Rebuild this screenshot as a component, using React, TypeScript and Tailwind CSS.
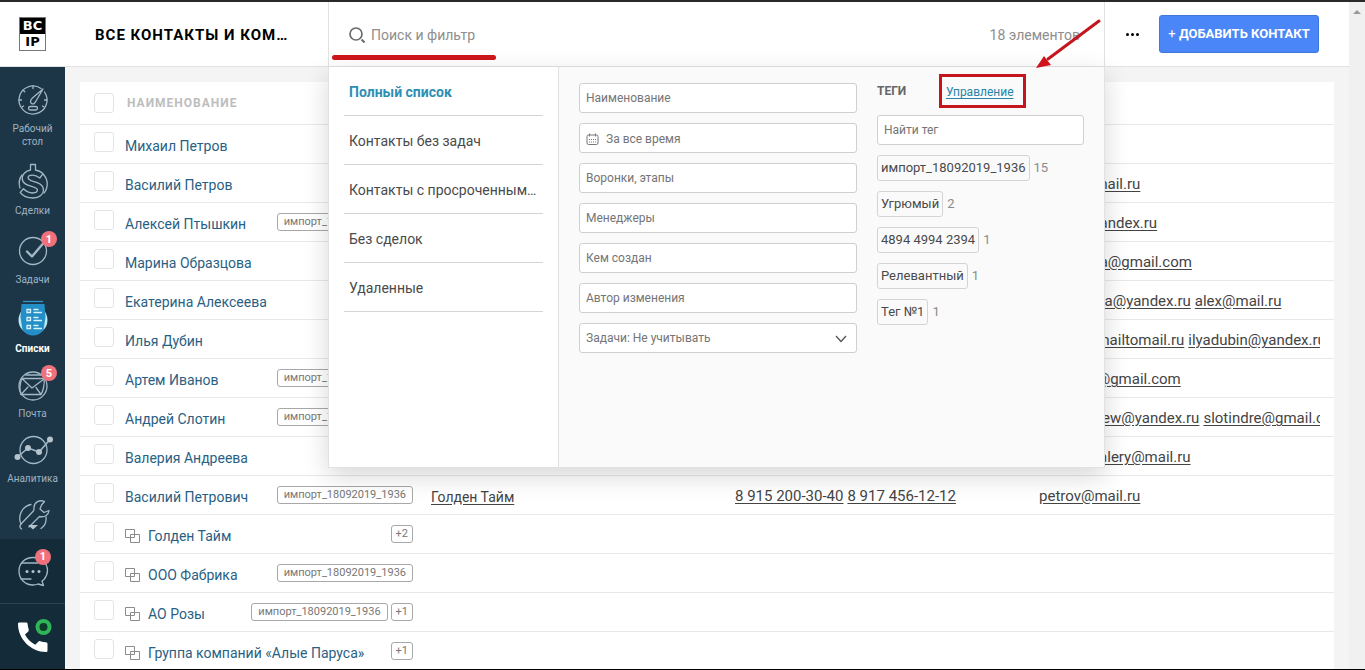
import type { ReactNode } from "react";
import clsx from "clsx";

interface Contact {
  name: string;
  isCompany?: boolean;
  tags?: string[];
  company?: string;
  phones?: string[];
  emails?: string[];
}

const IMPORT_TAG = "импорт_18092019_1936";

const contacts: Contact[] = [
  { name: "Михаил Петров" },
  { name: "Василий Петров", emails: ["petrov@mail.ru"] },
  { name: "Алексей Птышкин", tags: [IMPORT_TAG], emails: ["iptysh@yandex.ru"] },
  { name: "Марина Образцова", emails: ["obrazsova@gmail.com"] },
  { name: "Екатерина Алексеева", emails: ["ekalexeeva@yandex.ru", "alex@mail.ru"] },
  { name: "Илья Дубин", emails: ["lyadub@mailtomail.ru", "ilyadubin@yandex.ru"] },
  { name: "Артем Иванов", tags: [IMPORT_TAG], emails: ["vanovart@gmail.com"] },
  { name: "Андрей Слотин", tags: [IMPORT_TAG], emails: ["slotoandrew@yandex.ru", "slotindre@gmail.com"] },
  { name: "Валерия Андреева", emails: ["andreevvalery@mail.ru"] },
  {
    name: "Василий Петрович",
    tags: [IMPORT_TAG],
    company: "Голден Тайм",
    phones: ["8 915 200-30-40", "8 917 456-12-12"],
    emails: ["petrov@mail.ru"],
  },
  { name: "Голден Тайм", isCompany: true, tags: ["+2"] },
  { name: "ООО Фабрика", isCompany: true, tags: [IMPORT_TAG] },
  { name: "АО Розы", isCompany: true, tags: [IMPORT_TAG, "+1"] },
  { name: "Группа компаний «Алые Паруса»", isCompany: true, tags: ["+1"] },
];

const presets = ["Полный список", "Контакты без задач", "Контакты с просроченными задачами", "Без сделок", "Удаленные"];

const filterTags = [
  { label: IMPORT_TAG, count: 15 },
  { label: "Угрюмый", count: 2 },
  { label: "4894 4994 2394", count: 1 },
  { label: "Релевантный", count: 1 },
  { label: "Тег №1", count: 1 },
];

const fieldClass =
  "h-[30px] w-full rounded-[3px] border border-[#d0d0d0] bg-white px-1.5 text-xs text-[#757575] placeholder:text-[#757575] outline-none";

function Icon({ children }: { children: ReactNode }) {
  return (
    <svg viewBox="0 0 40 40" className="size-10" fill="none" stroke="#a3b8c6" strokeWidth="1.3" strokeLinecap="round" strokeLinejoin="round" aria-hidden="true">
      {children}
    </svg>
  );
}

function GaugeIcon() {
  return (
    <Icon>
      <path d="M31.5 12A14 14 0 1 1 28 8.500" />
      <path d="M30 9 20 17.500C17 20 17 22.500 18.500 23.500S22 23.500 23 21L30 9Z" />
      <rect x="15.500" y="26.500" width="9" height="3.500" rx="1.750" />
      <path d="M20 6v2.500M10 10l1.800 1.800M6 20h2.500M31.500 20H34M9 27l1.500-1M31 27l-1.500-1" />
    </Icon>
  );
}

function DollarIcon() {
  return (
    <Icon>
      <path d="M17.500 2.500h5V8c3.500.6 5.500 1.800 7.500 3.600l-3.200 4.400c-2.300-1.700-4.800-2.800-7.300-2.800-3 0-4.400 1.100-4.400 2.600 0 5 15.400 2.600 15.400 12.200 0 4.300-3.900 8-10.300 8-6 0-10.700-2.200-13-5.600l3.300-3.600c2.400 2.400 5.500 4.200 9 4.200 3.300 0 4.900-1.100 4.900-2.900 0-5-15.200-2.400-15.200-11.800C9.200 13 12 9 17.500 8V2.500Z" />
      <path d="M9 13a14 14 0 0 0-2 13M30.500 12.500A14 14 0 0 1 31 31" />
    </Icon>
  );
}

function TaskIcon() {
  return (
    <Icon>
      <circle cx="20" cy="20" r="13.500" />
      <path d="m14 20.500 5 5L30.500 12" strokeWidth="2.400" />
    </Icon>
  );
}

function ListIcon() {
  return (
    <Icon>
      <circle cx="20" cy="20" r="14.500" fill="#b9e8f7" stroke="none" />
      <path d="M8.500 4h23l1 13-2 13c-3 4-6.500 5.500-10.500 5.500S12.500 34 9.500 30l-2-13 1-13Z" fill="#238fc6" stroke="none" />
      <path d="M10 1.500h20" stroke="#2e9bd0" strokeLinecap="butt" />
      <path d="M14 9.500h3.500v3H14zM14 17.500h3.500v3H14zM14 25.500h3.500v3H14zM21 9.500h4M21 12.500h7.500M21 17.500h4M21 20.500h7.500M21 25.500h4M21 28.500h7.500" stroke="#d9f3fd" strokeLinejoin="miter" />
    </Icon>
  );
}

function MailIcon() {
  return (
    <Icon>
      <circle cx="20" cy="21" r="14" />
      <path d="M9 13.500h22c1 5-1 13-3 16H8c-2-5-1-12 1-16Z" />
      <path d="m9.500 14 9.500 9 12-9M8 29.500l7-7.500M28 29.500l-5-7M13 10h15" />
    </Icon>
  );
}

function AnalyticsIcon() {
  return (
    <Icon>
      <circle cx="20.500" cy="20" r="13.500" />
      <path d="m4.500 27 10.500-9 11 4L37 9.500" strokeWidth="1.600" />
      <g fill="#b4c4cf" stroke="none">
        <circle cx="4.500" cy="27" r="3" />
        <circle cx="15" cy="18" r="3" />
        <circle cx="26" cy="22" r="3" />
        <circle cx="37" cy="9.500" r="3" />
      </g>
    </Icon>
  );
}

function WrenchIcon() {
  return (
    <Icon>
      <path d="M31.500 4.500c-5-2-10 .5-10.500 5.500 0 2 .3 3-.8 4.200L8 27c-1.700 2-1 4 .5 5M26.500 19.500c5 1 9-1 9.500-6l-5 2-4-3.500 1.500-4 3-3.500M26.500 19.500 16 30" />
      <path d="M18 7.500A14 14 0 0 0 8 27M33 20c.5 5-1 9-5 11.500" />
      <path d="M15 28h10l-5 4.500Z" fill="#b4c4cf" stroke="none" />
    </Icon>
  );
}

function ChatIcon() {
  return (
    <Icon>
      <path d="M31 28.500c2-2.500 3.500-5.500 3.500-9C34.500 12 28 6.500 20 6.500S6 12 6 20s6 14 14 14c1.800 0 3.500-.4 5-1l5.500 1.500-1.500-4.500 2-1.500Z" />
      <path d="M9 12h16M8 28h10" />
      <g fill="#b4c4cf" stroke="none">
        <circle cx="14" cy="20.500" r="1.500" />
        <circle cx="20" cy="20.500" r="1.500" />
        <circle cx="26" cy="20.500" r="1.500" />
      </g>
    </Icon>
  );
}

function CompanyIcon() {
  return (
    <svg viewBox="0 0 16 16" className="size-4 shrink-0" fill="none" stroke="#8b8b8b" aria-hidden="true">
      <path d="M.5 1.500h9v8h-9zM5.500 6.500h9v8h-9z" />
    </svg>
  );
}

function Badge({ count }: { count: number }) {
  return (
    <span className="absolute top-0 right-2 flex size-4 items-center justify-center rounded-full bg-[#f0717c] text-[11px] font-bold text-white">
      {count}
    </span>
  );
}

interface NavItemProps {
  icon: ReactNode;
  label?: string;
  badge?: number;
  active?: boolean;
  className?: string;
}

function NavItem({ icon, label, badge, active, className }: NavItemProps) {
  return (
    <button
      type="button"
      aria-label={label ?? "Настройки"}
      className={clsx(
        "relative flex w-full flex-col items-center gap-0.5 text-[10px] leading-[13px]",
        active ? "font-bold text-white" : "text-[#9fb3c1]",
        className
      )}
    >
      {icon}
      {badge && <Badge count={badge} />}
      {label && <span className="px-3">{label}</span>}
    </button>
  );
}

function Sidebar() {
  return (
    <aside className="flex w-[65px] shrink-0 flex-col overflow-hidden bg-[#1c3648]">
      <nav className="flex min-h-0 flex-1 flex-col overflow-hidden pt-[13px]">
        <NavItem icon={<GaugeIcon />} label="Рабочий стол" />
        <NavItem icon={<DollarIcon />} label="Сделки" className="mt-3.5" />
        <NavItem icon={<TaskIcon />} label="Задачи" badge={1} className="mt-3.5" />
        <NavItem icon={<ListIcon />} label="Списки" active className="mt-3.5" />
        <NavItem icon={<MailIcon />} label="Почта" badge={5} className="mt-2.5" />
        <NavItem icon={<AnalyticsIcon />} label="Аналитика" className="mt-2.5" />
        <NavItem icon={<WrenchIcon />} className="mt-3" />
      </nav>
      <div className="shrink-0 bg-[#142b3a]">
        <button type="button" aria-label="Чаты" className="relative flex h-[65px] w-full items-center justify-center border-b border-[#2b4557]">
          <ChatIcon />
          <span className="absolute top-2.5 right-3.5 flex size-4 items-center justify-center rounded-full bg-[#f0717c] text-[11px] font-bold text-white">
            1
          </span>
        </button>
        <button type="button" aria-label="Телефония" className="flex h-[65px] w-full items-start justify-center pt-3">
          <svg viewBox="0 0 40 40" className="size-10" aria-hidden="true">
            <path d="M6.500 6.500h6.500c1 0 1.500.5 1.600 1.500.2 2 .5 3.800 1.100 5.600.2.700.1 1.300-.4 1.800l-3.300 3.200c2.300 4.500 5.800 8 10.300 10.200l3.200-3.200c.5-.5 1.100-.7 1.800-.4 1.800.6 3.700 1 5.600 1.100 1 .1 1.600.6 1.600 1.600v6.500c0 1-.6 1.600-1.600 1.600C18 36 5 23 5 8c0-1 .5-1.500 1.500-1.500Z" fill="#fff" />
            <circle cx="30.500" cy="11" r="6" fill="#0e3a2b" stroke="#2fb457" strokeWidth="4" />
          </svg>
        </button>
      </div>
    </aside>
  );
}

function FilterPanel() {
  return (
    <div className="absolute top-full -right-px -left-px z-10 mt-px flex h-[401px] border border-t-0 border-[#e2e2e2] bg-[#fafafa] text-[#4a4a4a] shadow-[0_8px_24px_rgba(0,0,0,0.16)]">
      <ul className="w-[230px] shrink-0 border-r border-[#e2e2e2] bg-white px-[15px]">
        {presets.map((preset, i) => (
          <li key={preset} className="border-b border-[#d4d4d4]">
            <button
              type="button"
              className={clsx("block h-12 w-full truncate px-[5px] pt-0.5 text-left text-sm", i === 0 && "font-bold text-[#2e8fb5]")}
            >
              {preset}
            </button>
          </li>
        ))}
      </ul>

      <form className="flex flex-1 flex-col gap-2.5 px-5 pt-4">
        <input className={fieldClass} placeholder="Наименование" aria-label="Наименование" />
        <button type="button" className={clsx(fieldClass, "flex items-center gap-[7px] pt-0.5 text-left")}>
          <svg viewBox="0 0 13 13" className="size-[13px]" fill="none" stroke="#777" aria-hidden="true">
            <rect x="1" y="2" width="11" height="9.500" rx="1.500" />
            <path d="M3.500.500v3M9.500.500v3" />
            <path d="M3 6.500h7M3 9h7" strokeDasharray="1 1" />
          </svg>
          За все время
        </button>
        <input className={fieldClass} placeholder="Воронки, этапы" aria-label="Воронки, этапы" />
        <input className={fieldClass} placeholder="Менеджеры" aria-label="Менеджеры" />
        <input className={fieldClass} placeholder="Кем создан" aria-label="Кем создан" />
        <input className={fieldClass} placeholder="Автор изменения" aria-label="Автор изменения" />
        <div className="relative">
          <select className={clsx(fieldClass, "block appearance-none")} aria-label="Задачи">
            <option>Задачи: Не учитывать</option>
          </select>
          <svg viewBox="0 0 12 8" className="pointer-events-none absolute top-3 right-2.5 h-2 w-3" fill="none" stroke="#555" strokeWidth="1.300" aria-hidden="true">
            <path d="m1 1 5 5.500L11 1" />
          </svg>
        </div>
      </form>

      <div className="flex w-[227px] shrink-0 flex-col pr-5">
        <div className="flex h-12 items-center">
          <h2 className="w-[62px] text-xs font-bold text-[#666]">ТЕГИ</h2>
          <a
            href="#tags"
            className="flex h-[34px] w-[87px] items-center border-[3px] border-[#c4161c] px-1 pt-0.5 text-xs text-[#2784a8] underline underline-offset-2"
          >
            Управление
          </a>
        </div>
        <input className={fieldClass} placeholder="Найти тег" aria-label="Найти тег" />
        <ul className="mt-2.5 flex flex-col items-start gap-2.5">
          {filterTags.map((tag) => (
            <li key={tag.label} className="flex items-center gap-1 text-[13px] text-[#8b8b8b]">
              <button type="button" className="h-[26px] rounded-[3px] border border-[#d4d4d4] px-[3px] text-[#4a4a4a]">
                {tag.label}
              </button>
              {tag.count}
            </li>
          ))}
        </ul>
      </div>
    </div>
  );
}

function Header() {
  return (
    <header className="relative z-10 flex h-[65px] shrink-0 border-b border-[#e2e2e2] bg-white">
      <div className="flex w-[65px] shrink-0 items-center justify-center">
        <div className="w-[27px] border border-[#777] text-center font-['DejaVu_Sans'] text-[13px] leading-4 font-bold text-black">
          <div className="bg-black text-white">BC</div>
          <div>IP</div>
        </div>
      </div>
      <h1 className="w-[263px] shrink-0 truncate pr-9 pl-[30px] text-[15px] leading-[66px] font-bold tracking-[1px] text-black">
        ВСЕ КОНТАКТЫ И КОМПАНИИ
      </h1>

      <div className="relative flex flex-1 items-center border-x border-[#e2e2e2] pt-px pr-6 pl-5">
        <svg viewBox="0 0 16 16" className="size-4" fill="none" stroke="#6b6b6b" strokeWidth="1.700" aria-hidden="true">
          <circle cx="7" cy="7" r="6" />
          <path d="m12.500 12.500 3 3" strokeWidth="2" />
        </svg>
        <input
          className="ml-1.5 min-w-0 flex-1 text-sm outline-none placeholder:text-[#8e8e8e]"
          placeholder="Поиск и фильтр"
          aria-label="Поиск и фильтр"
        />
        <span className="text-sm text-[#8e8e8e]">18 элементов</span>
        <span className="absolute bottom-1.5 left-[3px] h-[5px] w-[164px] rounded-full bg-[#cd161a]" />
        <FilterPanel />
        <svg viewBox="0 0 68 54" className="absolute top-4 right-0 z-20 h-[54px] w-[68px]" aria-hidden="true">
          <path d="M63 3 12 41" stroke="#c4161c" strokeWidth="3" strokeLinecap="round" />
          <path d="M0 50 8 38l3 4 4 5Z" fill="#d0121a" />
        </svg>
      </div>

      <div className="flex shrink-0 items-center pr-[30px] pl-[21px]">
        <button type="button" aria-label="Ещё" className="flex gap-0.5">
          <span className="size-[3px] rounded-full bg-black" />
          <span className="size-[3px] rounded-full bg-black" />
          <span className="size-[3px] rounded-full bg-black" />
        </button>
        <button
          type="button"
          className="ml-5 h-[38px] w-40 rounded-[3px] border border-[#3f78dc] bg-[#4a86f7] text-[13px] font-bold whitespace-nowrap text-white"
        >
          <span className="font-normal">+</span> ДОБАВИТЬ КОНТАКТ
        </button>
      </div>
    </header>
  );
}

function LinkList({ items, className }: { items?: string[]; className?: string }) {
  return (
    <div className={clsx("flex gap-1 overflow-hidden whitespace-nowrap", className)}>
      {items?.map((item) => (
        <a key={item} href={`#${item}`} className="text-[#444] underline underline-offset-2">
          {item}
        </a>
      ))}
    </div>
  );
}

function RowCheckbox({ label }: { label: string }) {
  return (
    <input
      type="checkbox"
      aria-label={label}
      className="block size-5 appearance-none rounded-[3px] border border-[#e4e4e4] bg-white"
    />
  );
}

function ContactsTable() {
  return (
    <table className="w-full table-fixed border-collapse bg-white text-left text-[15px]">
      <colgroup>
        <col className="w-[45px]" />
        <col className="w-[306px]" />
        <col className="w-[304px]" />
        <col className="w-[304px]" />
        <col />
      </colgroup>
      <thead>
        <tr className="h-[42px] border-b border-[#e8e8e8]">
          <th className="pl-3.5">
            <RowCheckbox label="Выбрать все" />
          </th>
          <th colSpan={4} className="pl-0.5 text-xs font-bold tracking-[1px] text-[#bdbdbd]">
            НАИМЕНОВАНИЕ
          </th>
        </tr>
      </thead>
      <tbody>
        {contacts.map((contact) => (
          <tr key={contact.name} className="h-[39px] border-b border-[#e8e8e8]">
            <td className="pb-1 pl-3.5">
              <RowCheckbox label={contact.name} />
            </td>
            <td className="pt-1 pr-[18px]">
              <div className="flex items-center gap-[3px]">
                <a href="#contact" className="mr-auto flex items-center gap-[7px] text-sm whitespace-nowrap text-[#2a5f84]">
                  {contact.isCompany && <CompanyIcon />}
                  {contact.name}
                </a>
                {contact.tags?.map((tag) => (
                  <span
                    key={tag}
                    className={clsx(
                      "mb-1 h-[18px] rounded-[3px] border border-[#a8a8a8] text-[11px] leading-4 text-[#777]",
                      tag.startsWith("+") ? "px-1" : "px-1.5"
                    )}
                  >
                    {tag}
                  </span>
                ))}
              </div>
            </td>
            <td className="pt-1">
              <LinkList items={contact.company ? [contact.company] : undefined} className="text-sm" />
            </td>
            <td className="pt-1">
              <LinkList items={contact.phones} />
            </td>
            <td className="pt-1 pr-3.5">
              <LinkList items={contact.emails} />
            </td>
          </tr>
        ))}
      </tbody>
    </table>
  );
}

export default function App() {
  return (
    <div className="flex h-screen overflow-hidden border-t-2 border-b border-t-[#2a2829] border-b-black bg-[#f4f4f4] font-[Roboto,'Noto_Sans',sans-serif]">
      <div className="flex min-w-0 flex-1 flex-col">
        <Header />
        <div className="flex min-h-0 flex-1">
          <Sidebar />
          <main className="min-w-0 flex-1 overflow-hidden px-[15px] pt-[15px]">
            <ContactsTable />
          </main>
        </div>
      </div>
      <div className="w-4 shrink-0 bg-[#f0f0f0] pt-2">
        <div className="mx-auto size-0 border-x-4 border-b-4 border-x-transparent border-b-[#999]" />
      </div>
    </div>
  );
}
